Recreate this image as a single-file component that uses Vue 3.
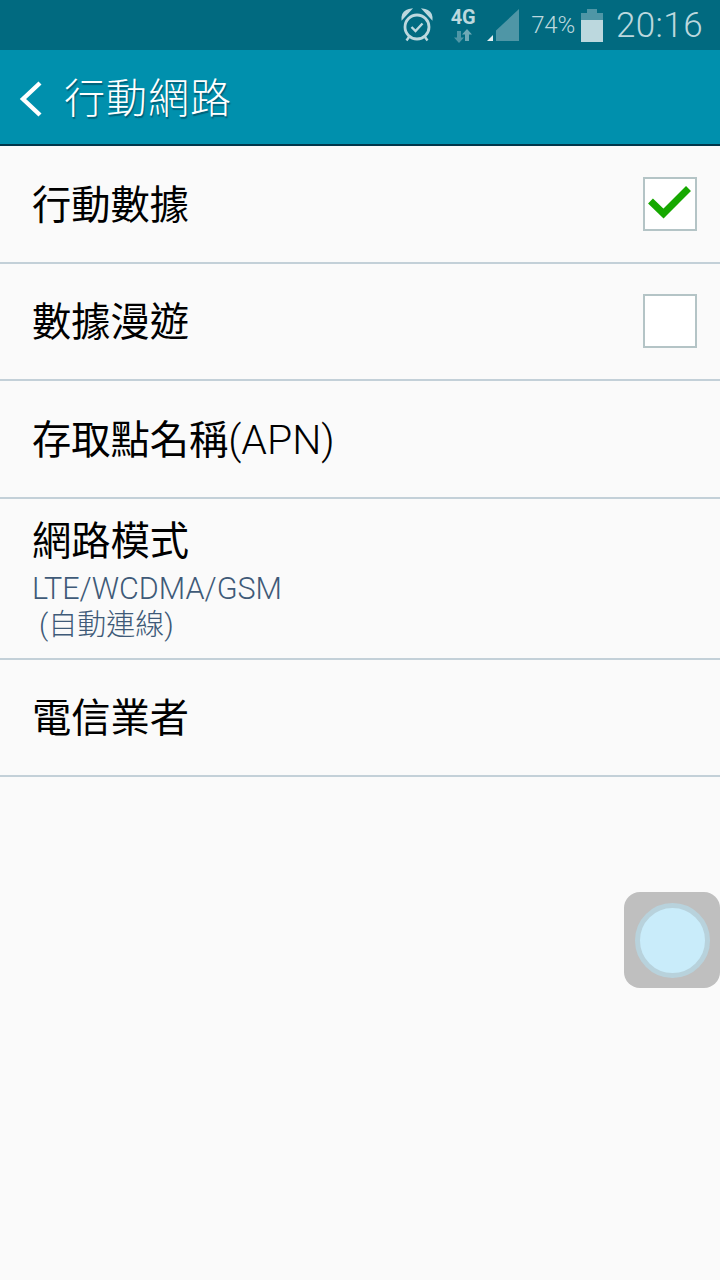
<script setup>
const rows = [
  { id: 1, title: '行動數據', check: 'on' },
  { id: 2, title: '數據漫遊', check: 'off' },
  { id: 3, title: '存取點名稱', latin: '(APN)' },
  { id: 4, title: '網路模式', sub: 'LTE/WCDMA/GSM', note: ' (自動連線)' },
  { id: 5, title: '電信業者' },
]
</script>

<template>
  <div class="screen">
    <div class="status">
      <svg class="alarm" width="32" height="34" viewBox="0 0 32 34" fill="none" stroke="#bcd8de">
        <circle cx="16" cy="19" r="12" stroke-width="2.8" />
        <path d="M10.500 19l4 4 7-7.500" stroke-width="2.400" />
        <path d="M2 9c0-3 3-6 6-6.500L2 9zM30 9c0-3-3-6-6-6.500L30 9z" stroke-width="3" fill="#bcd8de" />
        <path d="M8 29l-2.500 3.500M24 29l2.500 3.500" stroke-width="2.400" />
      </svg>
      <div class="net">
        <span class="net-label">4G</span>
        <svg class="arrows" width="18" height="14" viewBox="0 0 18 14">
          <path d="M5 14L0 8.500h3V2h4v6.500h3z" fill="#4f96a6" />
          <path d="M13 0l5 5.500h-3V12h-4V5.500H8z" fill="#6fa9b6" />
        </svg>
      </div>
      <svg class="signal" width="32" height="32" viewBox="0 0 32 32">
        <path d="M9 32V21.500L32 0v32z" fill="#4f96a6" />
        <path d="M0 32l6-6v6z" fill="#e3eff1" />
      </svg>
      <span class="pct">74%</span>
      <div class="battery"><i class="cap"></i><i class="empty"></i><i class="full"></i></div>
      <span class="clock">20:16</span>
    </div>

    <header class="bar">
      <svg class="back" width="24" height="38" viewBox="0 0 24 38" fill="none" stroke="#fff" stroke-width="4.4">
        <path d="M22 3L5 19l17 16" />
      </svg>
      <h1 class="bar-title">行動網路</h1>
    </header>

    <main class="list">
      <div v-for="r in rows" :key="r.id" class="row" :class="{ tall: r.sub }">
        <div class="text">
          <div class="title">{{ r.title }}<span v-if="r.latin" class="latin">{{ r.latin }}</span></div>
          <div v-if="r.sub" class="sub">{{ r.sub }}</div>
          <div v-if="r.note" class="note">{{ r.note }}</div>
        </div>
        <div v-if="r.check" class="box">
          <svg v-if="r.check === 'on'" class="tick" width="46" height="36" viewBox="0 0 46 36" fill="none" stroke="#16a800" stroke-width="7">
            <path d="M3.500 17l13 12.500L41.500 4.500" />
          </svg>
        </div>
      </div>
    </main>

    <div class="assist"><div class="assist-dot"></div></div>
  </div>
</template>

<style scoped>
.screen {
  position: relative;
  width: 720px;
  height: 1280px;
  overflow: hidden;
  background: #fafafa;
  font-family: Roboto, "Noto Sans CJK TC", sans-serif;
}
.status {
  height: 50px;
  background: #016a80;
  display: flex;
  align-items: center;
  justify-content: flex-end;
  padding-right: 17px;
  color: #bcd8de;
  box-sizing: border-box;
}
.alarm { margin-right: 17px; }
.net {
  display: flex;
  flex-direction: column;
  align-items: center;
  width: 26px;
  margin-right: 11px;
}
.net-label { font-size: 20px; font-weight: 700; line-height: 18px; }
.arrows { margin-top: 3px; }
.signal { margin-right: 12px; }
.pct { font-size: 24px; font-weight: 300; margin-right: 6px; letter-spacing: -0.2px; }
.battery { width: 22px; display: flex; flex-direction: column; align-items: center; margin-right: 13px; }
.cap { width: 10px; height: 4px; background: #4f96a6; }
.empty { width: 22px; height: 7px; background: #4f96a6; }
.full { width: 22px; height: 22px; background: #bcd8de; }
.clock { font-size: 35px; font-weight: 300; letter-spacing: 0.4px; }
.bar {
  height: 96px;
  background: #0090ad;
  border-bottom: 2px solid #01364a;
  box-sizing: border-box;
  display: flex;
  align-items: center;
  padding: 4px 0 0 18px;
}
.bar-title {
  margin: 0 0 0 22px;
  font-size: 41px;
  font-weight: 300;
  line-height: 1;
  letter-spacing: 1px;
  color: #fff;
  text-shadow: 1px 2px 1px rgba(0, 50, 70, 0.5);
}
.row {
  height: 117.500px;
  box-sizing: border-box;
  border-bottom: 2px solid #c3d0d8;
  display: flex;
  align-items: center;
  justify-content: space-between;
  padding: 0 23px 0 32px;
}
.row.tall { height: 161px; }
.text { padding-top: 4px; }
.row.tall .text { padding-top: 6px; }
.title { font-size: 39.250px; line-height: 44px; color: #000; font-weight: 400; }
.latin { font-size: 41px; font-weight: 300; }
.row.tall .title { margin-bottom: 7px; }
.sub { font-size: 30.500px; line-height: 36px; color: #3f5a78; font-weight: 300; }
.note { font-size: 29px; line-height: 36px; color: #3f5a78; font-weight: 300; white-space: pre; }
.box {
  position: relative;
  width: 54px;
  height: 54px;
  box-sizing: border-box;
  border: 2px solid #b4c4c6;
  background: #fff;
}
.tick { position: absolute; left: 2px; top: 5px; }
.assist {
  position: absolute;
  left: 624px;
  top: 892px;
  width: 96px;
  height: 96px;
  border-radius: 16px;
  background: #bfbfbf;
  display: flex;
  align-items: center;
  justify-content: center;
}
.assist-dot {
  width: 65px;
  height: 65px;
  border-radius: 50%;
  background: #c9ecfa;
  border: 5px solid #b8d2dc;
}
</style>
